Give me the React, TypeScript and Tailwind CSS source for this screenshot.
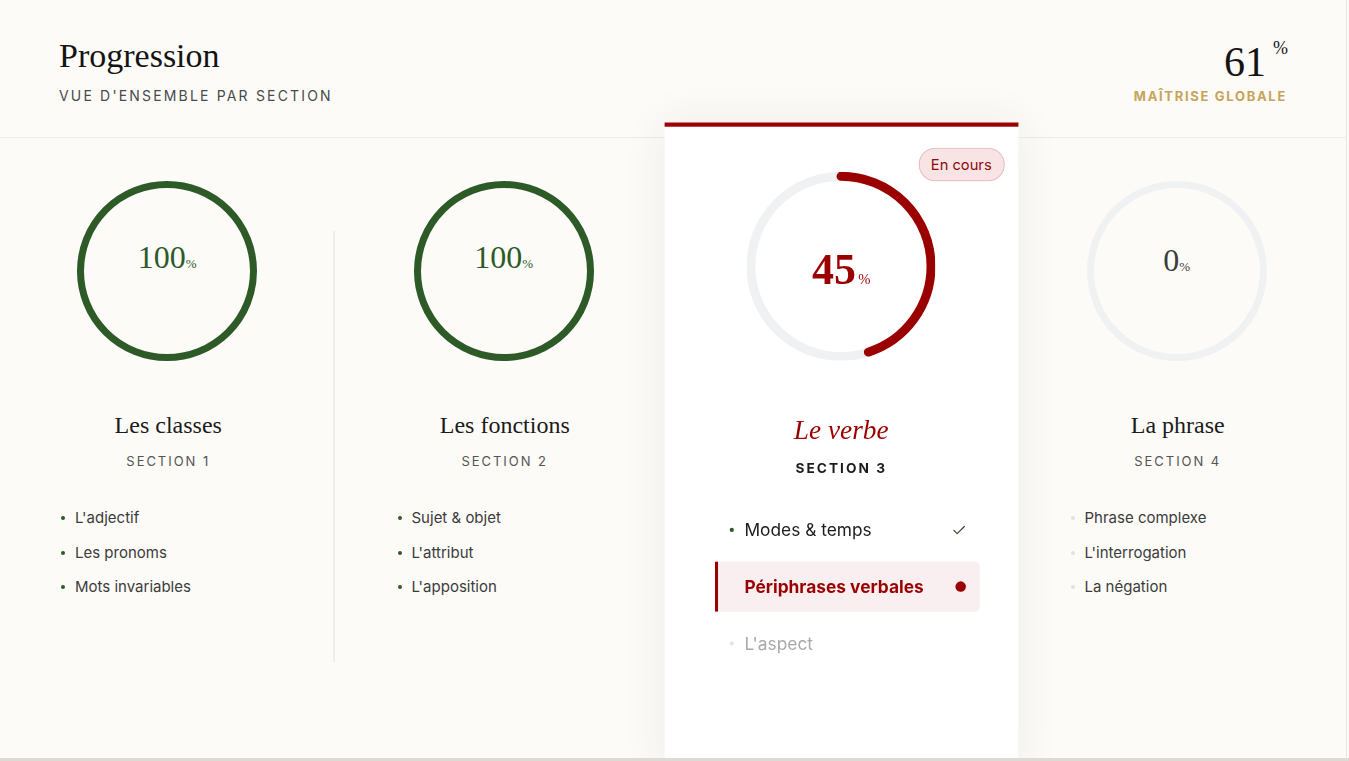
import { Check } from "lucide-react";

const serif = { fontFamily: '"Liberation Serif", "Times New Roman", serif' };

type Item = { label: string; state?: "done" | "current" | "todo" };

interface Section {
  title: string;
  num: number;
  pct: number;
  items: Item[];
}

const sections: Section[] = [
  { title: "Les classes", num: 1, pct: 100, items: [{ label: "L'adjectif" }, { label: "Les pronoms" }, { label: "Mots invariables" }] },
  { title: "Les fonctions", num: 2, pct: 100, items: [{ label: "Sujet & objet" }, { label: "L'attribut" }, { label: "L'apposition" }] },
  {
    title: "Le verbe",
    num: 3,
    pct: 45,
    items: [
      { label: "Modes & temps", state: "done" },
      { label: "Périphrases verbales", state: "current" },
      { label: "L'aspect", state: "todo" },
    ],
  },
  { title: "La phrase", num: 4, pct: 0, items: [{ label: "Phrase complexe" }, { label: "L'interrogation" }, { label: "La négation" }] },
];

function Ring({ pct, color, width }: { pct: number; color: string; width: number }) {
  const size = 180;
  const r = (size - width) / 2;
  const c = 2 * Math.PI * r;
  return (
    <svg width={size} height={size} viewBox={`0 0 ${size} ${size}`} className="block">
      <circle cx={90} cy={90} r={r} fill="none" stroke="#f0f1f3" strokeWidth={width} />
      {pct > 0 && (
        <circle
          cx={90}
          cy={90}
          r={r}
          fill="none"
          stroke={color}
          strokeWidth={width}
          strokeLinecap={pct < 100 ? "round" : "butt"}
          strokeDasharray={c}
          strokeDashoffset={c * (1 - pct / 100)}
          transform="rotate(-90 90 90)"
        />
      )}
    </svg>
  );
}

function Column({ s, index }: { s: Section; index: number }) {
  const done = s.pct === 100;
  return (
    <div className="relative flex flex-col items-center pt-[43px]">
      {index === 0 && <div className="absolute right-[2px] top-[93px] h-[431px] w-[2px] bg-[#efede8]" />}
      <div className="relative -ml-[2px]">
        <Ring pct={s.pct} color="#2d5a27" width={7} />
        <div className={`absolute inset-0 flex items-center justify-center ${done ? "pb-[28px]" : "pb-[22px]"}`}>
          <div className={`flex items-baseline ${done ? "text-[#2d5a27]" : "text-[#3d3d3d]"}`} style={serif}>
            <span className="text-[32px] leading-8">{s.pct}</span>
            <span className="text-[13px]">%</span>
          </div>
        </div>
      </div>
      <h3 className="mt-[48px] text-[24px] leading-8 text-[#1c1c1c]" style={serif}>{s.title}</h3>
      <div className="mt-[10px] text-[13px] leading-5 tracking-[0.15em] text-[#555555]">SECTION {s.num}</div>
      <ul className="mt-[30px] self-stretch ml-[48px] mr-[37px]">
        {s.items.map((it) => (
          <li key={it.label} className="flex h-[34.5px] items-center border-l-[3px] border-transparent pl-[10px] text-[15px] text-[#3b3b3b]">
            <span className={`h-[4px] w-[4px] rounded-full ${done ? "bg-[#2d5a27]" : "bg-[#e2e2e2]"}`} />
            <span className="ml-[10px]">{it.label}</span>
          </li>
        ))}
      </ul>
    </div>
  );
}

function ActiveColumn({ s }: { s: Section }) {
  return (
    <div className="relative z-10 flex scale-105 flex-col items-center border-t-4 border-[#9b0000] bg-white pt-[43px] shadow-[0_0_40px_rgba(60,50,30,0.08)]">
      <span className="absolute right-[13px] top-[20px] rounded-full border border-[#e8bcbf] bg-[#f9e4e5] px-[11px] py-[5px] text-[14px] leading-5 text-[#8f0a0a]">
        En cours
      </span>
      <div className="relative">
        <Ring pct={s.pct} color="#9b0000" width={8.5} />
        <div className="absolute inset-0 flex items-center justify-center pt-[6px]">
          <div className="flex items-baseline text-[#9b0000]" style={serif}>
            <span className="text-[42px] font-semibold leading-[42px]">{s.pct}</span>
            <span className="ml-[2px] text-[14px]">%</span>
          </div>
        </div>
      </div>
      <h3 className="mt-[50px] text-[26px] italic leading-8 text-[#9b0000]" style={serif}>{s.title}</h3>
      <div className="mt-[10px] text-[13px] font-bold leading-5 tracking-[0.15em] text-[#1c1c1c]">SECTION {s.num}</div>
      <ul className="mt-[25px] flex flex-col gap-[6px] self-stretch ml-[48px] mr-[37px]">
        {s.items.map((it) => {
          const cur = it.state === "current";
          return (
            <li
              key={it.label}
              className={`flex h-[48px] items-center border-l-[3px] pl-[11px] pr-[12px] text-[16.5px] ${
                cur ? "rounded-r border-[#9b0000] bg-[#f9eff0] font-bold text-[#9b0000]" : "border-transparent"
              } ${it.state === "done" ? "text-[#1c1c1c]" : ""} ${it.state === "todo" ? "text-[#a9a9a9]" : ""}`}
            >
              <span
                className={`h-[4px] w-[4px] rounded-full ${
                  it.state === "done" ? "bg-[#2d5a27]" : it.state === "todo" ? "bg-[#e6e6e6]" : "bg-transparent"
                }`}
              />
              <span className="ml-[10px] flex-1">{it.label}</span>
              {it.state === "done" && <Check size={15} strokeWidth={1.75} className="text-[#2d4a2a]" />}
              {cur && <span className="mr-[1px] h-[10px] w-[10px] rounded-full bg-[#9b0000]" />}
            </li>
          );
        })}
      </ul>
    </div>
  );
}

export default function App() {
  return (
    <div className="h-[761px] w-full bg-[#fcfbf8]" style={{ fontFamily: 'Inter, "Liberation Sans", sans-serif' }}>
      <div className="relative h-[758px] w-[1347px] overflow-hidden border-r border-[#ebe8e2] bg-[#fcfbf8]">
        <header className="flex h-[138px] justify-between border-b border-[#efece6] pl-[59px] pr-[59px]">
          <div className="pt-[36px]">
            <h1 className="text-[34px] leading-[40px] text-[#141414]" style={serif}>Progression</h1>
            <p className="mt-[10px] text-[14px] leading-5 tracking-[0.155em] text-[#4a4a4a]">VUE D'ENSEMBLE PAR SECTION</p>
          </div>
          <div className="flex flex-col items-end pt-[41px]">
            <div className="-mr-[1px] flex items-start text-[#141414]" style={serif}>
              <span className="text-[42px] leading-[42px]">61</span>
              <span className="-mt-[2px] ml-[7px] text-[18px] leading-[18px]">%</span>
            </div>
            <div className="mt-[5px] text-[13px] font-bold leading-4 tracking-[0.13em] text-[#c8a35a]">MAÎTRISE GLOBALE</div>
          </div>
        </header>
        <div className="grid h-[620px] grid-cols-4">
          {sections.map((s, i) => (i === 2 ? <ActiveColumn key={s.num} s={s} /> : <Column key={s.num} s={s} index={i} />))}
        </div>
      </div>
      <div className="h-[3px] w-full bg-[#dddad3]" />
    </div>
  );
}
